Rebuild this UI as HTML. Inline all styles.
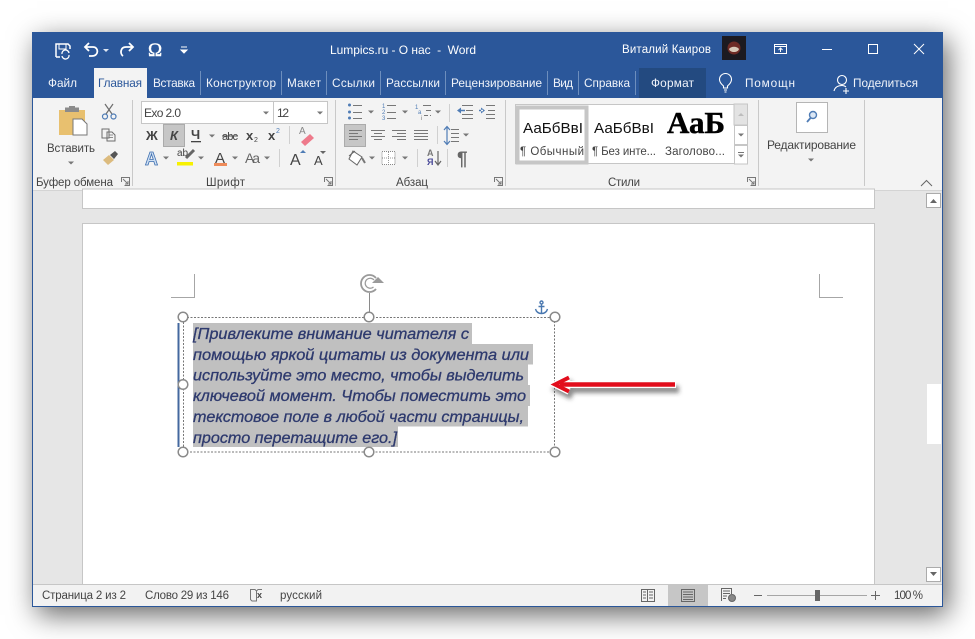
<!DOCTYPE html>
<html lang="ru"><head><meta charset="utf-8"><title>Lumpics.ru - О нас - Word</title>
<style>
html,body{margin:0;padding:0;background:#fff;width:975px;height:639px;overflow:hidden}
#w{position:absolute;left:32px;top:32px;width:911px;height:575px;box-shadow:5px 8px 26px rgba(0,0,0,.6)}
svg{position:absolute;left:0;top:0}
text{font-family:"Liberation Sans",sans-serif;font-size:11.5px;fill:#444;white-space:pre}
.t text{fill:#fff}
.tab text{fill:#f1f4fa;font-size:11.8px}
.g text{font-size:11.5px;fill:#444}
.q text{font-family:"Liberation Sans",sans-serif;font-style:italic;font-size:15.5px;fill:#2e3a6e;stroke:#2e3a6e;stroke-width:.3px}
</style></head><body>
<div id="w"></div>
<svg width="975" height="639" viewBox="0 0 975 639" xmlns="http://www.w3.org/2000/svg">
<defs>
<path id="dd" d="M-3 -1.500H3L0 1.500Z" fill="#777"/>
<filter id="sh" x="-20%" y="-60%" width="140%" height="260%"><feDropShadow dx="3" dy="5" stdDeviation="2.2" flood-color="#333" flood-opacity=".55"/></filter>
</defs>
<!-- frame -->
<rect x="32" y="32" width="911" height="575" fill="#2b579a"/>
<rect x="33" y="98" width="909" height="92" fill="#f3f3f3"/>
<rect x="33" y="190" width="909" height="394" fill="#e6e6e6"/>
<rect x="33" y="584" width="909" height="22" fill="#f2f2f2"/>
<line x1="33" y1="190.500" x2="942" y2="190.500" stroke="#d4d4d4"/>
<line x1="33" y1="584.500" x2="942" y2="584.500" stroke="#c6c6c6"/>

<!-- QAT -->
<g fill="none" stroke="#fff" stroke-width="1.500">
<path d="M56 57V44H68L70 46V49M56 57H60"/>
<path d="M59 44V49H66V44" stroke-width="1"/>
<path d="M62 54A3.500 3.500 0 0 1 69 53M69 55A3.500 3.500 0 0 1 62 56" stroke-width="1.300"/>
<path d="M89 43L85 47L89 51M85 47H93C99 47 99 56 92 56H89" stroke-width="1.800"/>
<path d="M129 43L133 47L129 51M133 47H126C120 47 120 54 123 56" stroke-width="1.800"/>
</g>
<path d="M103 49H109L106 52Z" fill="#dfe7f3"/>
<text x="148" y="56" style="font-size:19px;fill:#fff;font-family:'Liberation Serif',serif;stroke:#fff;stroke-width:.4px">Ω</text>
<path d="M181 47H187M181 50H187L184 53Z" stroke="#fff" fill="#fff" stroke-width="1"/>

<!-- title -->
<g class="t">
<text x="330" y="54" textLength="146" lengthAdjust="spacing" style="font-size:12px">Lumpics.ru - О нас  -  Word</text>
<text x="622" y="53" textLength="89" lengthAdjust="spacing">Виталий Каиров</text>
</g>
<rect x="722" y="36" width="24" height="24" fill="#1c1a20"/>
<circle cx="734" cy="48" r="6.500" fill="#6e2b25"/>
<path d="M729 49C731 46 737 46 739 49C738 53 730 53 729 49Z" fill="#d9c9b8"/>
<g fill="none" stroke="#fff" stroke-width="1">
<rect x="774.500" y="44.500" width="12" height="9"/>
<path d="M774 46.500H787M780.500 52V48M778.500 50L780.500 48L782.500 50"/>
<path d="M822 49.500H832"/>
<rect x="868.500" y="44.500" width="9" height="9"/>
<path d="M914 44L924 54M924 44L914 54"/>
</g>

<!-- tabs -->
<rect x="639" y="68" width="67" height="30" fill="#234a80"/>
<rect x="94" y="68" width="53" height="31" fill="#f3f3f3"/>
<g stroke="#6d8ebd" stroke-width="1">
<path d="M200.500 71V95M281.500 71V95M326.500 71V95M380.500 71V95M445.500 71V95M547.500 71V95M578.500 71V95M635.500 71V95"/>
</g>
<g class="tab">
<text x="48" y="87" textLength="29" lengthAdjust="spacing">Файл</text>
<text x="98" y="87" textLength="44" lengthAdjust="spacing" style="fill:#2b579a">Главная</text>
<text x="153" y="87" textLength="42" lengthAdjust="spacing">Вставка</text>
<text x="206" y="87" textLength="70" lengthAdjust="spacing">Конструктор</text>
<text x="287" y="87" textLength="34" lengthAdjust="spacing">Макет</text>
<text x="332" y="87" textLength="43" lengthAdjust="spacing">Ссылки</text>
<text x="386" y="87" textLength="54" lengthAdjust="spacing">Рассылки</text>
<text x="451" y="87" textLength="91" lengthAdjust="spacing">Рецензирование</text>
<text x="553" y="87" textLength="20" lengthAdjust="spacing">Вид</text>
<text x="584" y="87" textLength="46" lengthAdjust="spacing">Справка</text>
<text x="651" y="87" textLength="43" lengthAdjust="spacing">Формат</text>
<text x="745" y="87" textLength="50" lengthAdjust="spacing">Помощн</text>
<text x="853" y="87" textLength="65" lengthAdjust="spacing">Поделиться</text>
</g>
<g fill="none" stroke="#fff" stroke-width="1.100">
<path d="M723.500 88V86C720 83 719.500 81 719.500 79.500A6 6 0 0 1 731.500 79.500C731.500 81 731 83 727.500 86V88ZM724 90H727M724.500 92H726.500"/>
<circle cx="842" cy="80" r="4.500"/>
<path d="M834 91C835 87 838 85.500 842 85.500C844 85.500 845 86 846 87M846 88V94M843 91H849"/>
</g>

<!-- clipboard group -->
<path d="M59 110H85V135H59Z" fill="#e8c06f"/>
<path d="M65 107.500H79V112H65Z" fill="#8b8b8b"/><rect x="69" y="106" width="6" height="3" fill="#8b8b8b"/>
<path d="M73 119H82L87 124V135H73Z" fill="#fff" stroke="#777"/>
<text x="47" y="152" textLength="48" lengthAdjust="spacing">Вставить</text>
<use href="#dd" x="71" y="163"/>
<g fill="none" stroke="#6d6d6d" stroke-width="1.200">
<path d="M105 104L112 114M113 104L106 114"/>
<circle cx="105" cy="116.500" r="2.500" stroke="#4f7cb5"/><circle cx="113.500" cy="116.500" r="2.500" stroke="#4f7cb5"/>
<path d="M102 129H109V138H102ZM107 132H112L115 135V141H107Z" stroke-width="1"/>
<path d="M109 135H113M109 137.500H113" stroke-width=".8"/>
</g>
<path d="M103 160L109 155L114 160L108 165Z" fill="#dcbb7e"/><path d="M110 155L115 151L118 154L114 159Z" fill="#555"/>

<!-- font group -->
<rect x="141.500" y="101.500" width="132" height="22" fill="#fff" stroke="#c6c6c6"/>
<rect x="273.500" y="101.500" width="54" height="22" fill="#fff" stroke="#c6c6c6"/>
<text x="144" y="117" textLength="37" lengthAdjust="spacing" style="font-size:12px">Exo 2.0</text>
<text x="277" y="117" textLength="12" lengthAdjust="spacing" style="font-size:12px">12</text>
<use href="#dd" x="266" y="113"/><use href="#dd" x="320" y="113"/>
<rect x="163.500" y="124.500" width="21" height="22" fill="#c6c6c6" stroke="#ababab"/>
<text x="146" y="140" style="font-weight:bold;font-size:13px">Ж</text>
<text x="170" y="140" style="font-weight:bold;font-style:italic;font-size:13px">К</text>
<text x="191" y="139" style="font-weight:bold;font-size:13px">Ч</text>
<rect x="191" y="141" width="10" height="1.300" fill="#444"/>
<use href="#dd" x="212" y="136"/>
<text x="222" y="140" textLength="16" lengthAdjust="spacing" style="font-size:11px">abc</text>
<rect x="222" y="135.500" width="16" height="1" fill="#555"/>
<text x="246" y="140" style="font-weight:bold;font-size:13px">x</text><text x="254" y="142" style="font-size:7px">2</text>
<text x="268" y="140" style="font-weight:bold;font-size:13px">x</text><text x="276" y="133" style="font-size:7px;fill:#4f7cb5">2</text>
<path d="M289.500 126V144M279.500 149V167" stroke="#d0d0d0"/>
<text x="299" y="134" style="font-size:10px;fill:#888">A</text>
<path d="M301 142L310 134L314 138L305 146Z" fill="#ee7a8b"/>

<text x="145" y="165" style="font-size:18px;fill:#cfe0f3;stroke:#3e6fb0;stroke-width:.8px;font-weight:bold">A</text>
<use href="#dd" x="166" y="158"/>
<text x="177" y="156" style="font-size:10px">ab</text>
<path d="M186 158L194 150" stroke="#666" stroke-width="3"/>
<rect x="177" y="162" width="16" height="3.500" fill="#f7f100"/>
<use href="#dd" x="201" y="158"/>
<text x="215" y="163" style="font-size:15px">A</text><rect x="214" y="163" width="13" height="3" fill="#ee8b5a"/>
<use href="#dd" x="235" y="158"/>
<text x="245" y="163" textLength="15" lengthAdjust="spacing" style="font-size:14px;fill:#666">Aa</text>
<use href="#dd" x="267" y="158"/>
<text x="290" y="165" style="font-size:16px">A</text><path d="M300 153H306L303 150Z" fill="#4f7cb5"/>
<text x="314" y="165" style="font-size:13px">A</text><path d="M320 151H326L323 154Z" fill="#666"/>

<!-- paragraph group -->
<g stroke="#777" stroke-width="1" fill="none">
<path d="M353 105.500H362M353 112.500H362M353 118.500H362"/>
<path d="M387 105.500H396M387 112.500H396M387 118.500H396"/>
<path d="M423 105.500H431M426 110.500H431M424 115.500H428M430 115.500H431"/>
<path d="M462 105.500H473M466 110.500H473M462 114.500H473M462 118.500H473"/>
<path d="M486 105.500H495M488 110.500H495M486 114.500H495M486 118.500H495"/>
<path d="M449.500 104V122M437.500 126V144M417.500 149V167M447.500 149V167" stroke="#d0d0d0"/>
</g>
<g fill="#4f7cb5"><circle cx="349.500" cy="105" r="1.500"/><circle cx="349.500" cy="112" r="1.500"/><circle cx="349.500" cy="118" r="1.500"/></g>
<path d="M457 110.500L461 107.500V113.500ZM459 109.800H465V111.200H459Z" fill="#4f7cb5"/>
<path d="M485 110.500L481 107.500V113.500ZM479 109.800H483V111.200H479Z" fill="#4f7cb5"/>
<text x="382" y="108" style="font-size:6px;fill:#4f7cb5">1</text><text x="382" y="114" style="font-size:6px;fill:#4f7cb5">2</text><text x="382" y="120" style="font-size:6px;fill:#4f7cb5">3</text>
<text x="415" y="109" style="font-size:6px;fill:#4f7cb5">1</text><text x="418" y="114" style="font-size:6px;fill:#4f7cb5">a</text><text x="421" y="120" style="font-size:6px;fill:#777">i</text>
<use href="#dd" x="371" y="112"/><use href="#dd" x="405" y="112"/><use href="#dd" x="438" y="112"/>
<rect x="344.500" y="124.500" width="21" height="22" fill="#c6c6c6" stroke="#ababab"/>
<g stroke="#777" stroke-width="1" fill="none">
<path d="M349 130.500H362M349 133.500H358M349 136.500H362M349 139.500H358"/>
<path d="M371 130.500H385M374 133.500H382M371 136.500H385M374 139.500H382"/>
<path d="M392 130.500H406M397 133.500H406M392 136.500H406M397 139.500H406"/>
<path d="M414 130.500H428M414 133.500H428M414 136.500H428M414 139.500H428"/>
<path d="M451 129.500H459M451 133.500H459M451 137.500H459M451 141.500H459"/>
</g>
<path d="M447 127V144M444 130L447 126.500L450 130M444 141L447 144.500L450 141" fill="none" stroke="#4f7cb5" stroke-width="1.200"/>
<use href="#dd" x="466" y="135"/>
<path d="M353 151L362 157L357 165L349 159Z" fill="#fff" stroke="#666"/><path d="M349 156L355 151" stroke="#666"/><path d="M362 158L365 163" stroke="#777" stroke-width="2"/>
<use href="#dd" x="372" y="158"/>
<rect x="382" y="151.500" width="13" height="13" fill="#fff" stroke="#888" stroke-dasharray="1 1"/>
<path d="M388.500 152V164M382 158H395" stroke="#999" stroke-dasharray="1 1"/>
<use href="#dd" x="405" y="158"/>
<text x="427" y="156" style="font-size:9px;font-weight:bold;fill:#777">А</text>
<text x="427" y="165" style="font-size:9px;font-weight:bold;fill:#4a4a9a">Я</text>
<path d="M438 151V164M435 161L438 165L441 161" fill="none" stroke="#666" stroke-width="1.200"/>
<text x="457" y="165" style="font-size:19px;font-weight:bold;fill:#666">¶</text>

<!-- styles -->
<rect x="515.500" y="104.500" width="232" height="59" fill="#fff" stroke="#c6c6c6"/>
<rect x="517.500" y="107.500" width="69" height="55" fill="#fff" stroke="#c6c6c6" stroke-width="4"/>
<text x="523" y="133" textLength="60" lengthAdjust="spacingAndGlyphs" style="font-size:15px;fill:#111">АаБбВвI</text>
<text x="594" y="133" textLength="60" lengthAdjust="spacingAndGlyphs" style="font-size:15px;fill:#111">АаБбВвI</text>
<text x="667" y="133" textLength="58" lengthAdjust="spacingAndGlyphs" style="font-family:'Liberation Serif',serif;font-weight:bold;font-size:31px;fill:#000;stroke:#000;stroke-width:.5px">АаБ</text>
<text x="520" y="155" textLength="64" lengthAdjust="spacing">¶ Обычный</text>
<text x="592" y="155" textLength="64" lengthAdjust="spacing">¶ Без инте...</text>
<text x="665" y="155" textLength="60" lengthAdjust="spacing">Заголово...</text>
<rect x="734" y="104" width="13.500" height="21" fill="#e3e3e3" stroke="#c6c6c6"/>
<rect x="734.500" y="125.500" width="13" height="19" fill="#fff" stroke="#c6c6c6"/>
<rect x="734.500" y="145.500" width="13" height="18.500" fill="#fff" stroke="#c6c6c6"/>
<path d="M738 116H744L741 113Z" fill="#bdbdbd"/>
<use href="#dd" x="741" y="135"/>
<path d="M738 152.500H744" stroke="#777"/><use href="#dd" x="741" y="156"/>

<!-- editing -->
<rect x="796.500" y="102.500" width="31" height="30" fill="#fff" stroke="#b5b5b5"/>
<circle cx="813" cy="115" r="3.500" fill="#dbe7f5" stroke="#4f7cb5" stroke-width="1.400"/>
<path d="M810.500 118L807 122" stroke="#4f7cb5" stroke-width="1.800"/>
<text x="767" y="149" textLength="89" lengthAdjust="spacing" style="font-size:12px">Редактирование</text>
<use href="#dd" x="811" y="160"/>
<path d="M921 186L926.500 180.500L932 186" fill="none" stroke="#666"/>

<!-- group seps and labels -->
<path d="M132.500 100V186M335.500 100V186M505.500 100V186M758.500 100V186M864.500 100V186" stroke="#c9c9c9"/>
<g class="g">
<text x="36" y="186" textLength="77" lengthAdjust="spacing">Буфер обмена</text>
<text x="206" y="186" textLength="39" lengthAdjust="spacing">Шрифт</text>
<text x="396" y="186" textLength="32" lengthAdjust="spacing">Абзац</text>
<text x="608" y="186" textLength="32" lengthAdjust="spacing">Стили</text>
</g>
<g fill="none" stroke="#777" stroke-width="1">
<path d="M121.500 182V177.500H129.500V185.500H124.500M123 179L128 184M128 181V184H125"/>
<path d="M324.500 182V177.500H332.500V185.500H327.500M326 179L331 184M331 181V184H328"/>
<path d="M494.500 182V177.500H502.500V185.500H497.500M496 179L501 184M501 181V184H498"/>
<path d="M747.500 182V177.500H755.500V185.500H750.500M749 179L754 184M754 181V184H751"/>
</g>

<!-- document -->
<rect x="82.500" y="189" width="792" height="19.500" fill="#fff" stroke="#c6c6c6"/>
<rect x="82.500" y="223.500" width="792" height="361" fill="#fff" stroke="#c6c6c6"/>
<path d="M194.500 274V297.500H171M819.500 274V297.500H843" fill="none" stroke="#a6a6a6"/>

<!-- selection -->
<g fill="#c0c0c0">
<rect x="193" y="323" width="279" height="21"/>
<rect x="193" y="344" width="340" height="20.500"/>
<rect x="193" y="364.500" width="335" height="20.500"/>
<rect x="193" y="385" width="337" height="21"/>
<rect x="193" y="406" width="335" height="20.500"/>
<rect x="193" y="426.500" width="205" height="20.500"/>
</g>
<g class="q">
<text x="193" y="339" textLength="276" lengthAdjust="spacingAndGlyphs">[Привлеките внимание читателя с</text>
<text x="193" y="360" textLength="336" lengthAdjust="spacingAndGlyphs">помощью яркой цитаты из документа или</text>
<text x="193" y="380.500" textLength="331" lengthAdjust="spacingAndGlyphs">используйте это место, чтобы выделить</text>
<text x="193" y="401" textLength="333" lengthAdjust="spacingAndGlyphs">ключевой момент. Чтобы поместить это</text>
<text x="193" y="422" textLength="331" lengthAdjust="spacingAndGlyphs">текстовое поле в любой части страницы,</text>
<text x="193" y="443" textLength="204" lengthAdjust="spacingAndGlyphs">просто перетащите его.]</text>
</g>
<rect x="177.500" y="323" width="2" height="124" fill="#44689f"/>
<rect x="183.500" y="317.500" width="371" height="134.500" fill="none" stroke="#777" stroke-dasharray="2 1.500"/>
<path d="M369.500 293V312" stroke="#8a8a8a"/>
<g fill="#fff" stroke="#8a8a8a" stroke-width="1.500">
<circle cx="183" cy="317" r="4.800"/><circle cx="369" cy="317" r="4.800"/><circle cx="555" cy="317" r="4.800"/>
<circle cx="183" cy="384.500" r="4.800"/>
<circle cx="183" cy="452" r="4.800"/><circle cx="369" cy="452" r="4.800"/><circle cx="555" cy="452" r="4.800"/>
</g>
<g fill="none" stroke="#9a9a9a">
<path d="M376 289A8.500 8.500 0 1 1 376 278" stroke-width="1.800"/>
<path d="M373.500 287A5 5 0 1 1 374 280" stroke-width="1.200"/>
<path d="M372 283L384 283L378 277Z" fill="#9a9a9a" stroke="none"/>
</g>
<g fill="none" stroke="#4a78b0" stroke-width="1.400">
<circle cx="541.500" cy="302.500" r="1.500"/><path d="M541.500 304V314M538.500 306.500H544.500M535.500 309C536.500 312.500 539 313.500 541.500 313.500C544 313.500 546.500 312.500 547.500 309"/>
</g>

<!-- arrow -->
<g filter="url(#sh)">
<path d="M676 384.500H560" stroke="#fff" stroke-width="7" fill="none"/>
<path d="M569 377.500L555 384.500L569 391.500" fill="none" stroke="#fff" stroke-width="6.500"/>
<path d="M675 384.500H560" stroke="#e20f1c" stroke-width="4.500" fill="none"/>
<path d="M569 377.500L555 384.500L569 391.500" fill="none" stroke="#e20f1c" stroke-width="4"/>
</g>

<!-- scrollbar -->
<rect x="926.500" y="193.500" width="14" height="14" fill="#fff" stroke="#ababab"/>
<path d="M930 203H937L933.500 199Z" fill="#666"/>
<rect x="927" y="384" width="14" height="60" fill="#fff"/>
<rect x="926.500" y="567.500" width="14" height="14" fill="#fff" stroke="#ababab"/>
<path d="M930 572H937L933.500 576Z" fill="#666"/>

<!-- status -->
<text x="42" y="599" textLength="84" lengthAdjust="spacing">Страница 2 из 2</text>
<text x="145" y="599" textLength="84" lengthAdjust="spacing">Слово 29 из 146</text>
<path d="M250.500 589.500H255L256.500 591V601H252L250.500 599.500ZM256.500 591L258 589.500H262" fill="none" stroke="#777"/>
<text x="257" y="598" style="font-size:9px;font-weight:bold">x</text>
<text x="280" y="599" textLength="42" lengthAdjust="spacing">русский</text>
<rect x="668" y="585" width="40" height="21" fill="#c6c6c6"/>
<g fill="none" stroke="#666">
<path d="M641.500 589.500H647.500V601.500H641.500ZM647.500 589.500H654.500V601.500H647.500ZM643 592H646M643 595H646M643 598H646M649 592H653M649 595H653M649 598H653"/>
<rect x="681.500" y="589.500" width="13" height="12"/>
<path d="M683 592H693M683 594.500H693M683 597H693M683 599.500H693"/>
<path d="M721.500 601V588.500H731.500V594M723 591H730M723 593.500H730M723 596H727M723 598.500H726"/>
<circle cx="732" cy="598" r="3.500" fill="#888"/>
<path d="M754 595.500H762M871 595.500H880M875.500 591V600"/>
</g>
<path d="M767 595.500H867" stroke="#a6a6a6"/>
<rect x="815" y="590" width="5" height="11" fill="#666"/>
<text x="894" y="599" textLength="29" lengthAdjust="spacing">100 %</text>
<rect x="32.500" y="32.500" width="910" height="574" fill="none" stroke="#2b579a"/>
</svg>
</body></html>
